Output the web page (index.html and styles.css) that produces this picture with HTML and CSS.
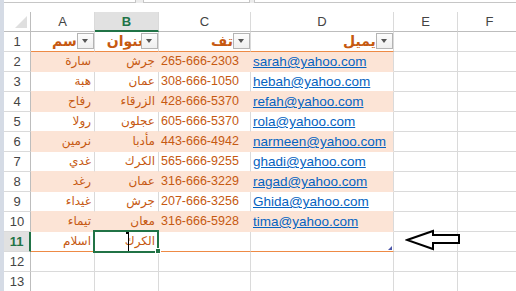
FILE: index.html
```html
<!DOCTYPE html>
<html lang="ar">
<head>
<meta charset="utf-8">
<title>Sheet</title>
<link rel="stylesheet" href="styles.css">
</head>
<body>
<div class="app">
  <div class="frame-left"></div>
  <div class="main">
    <div class="fbar">
      <div class="box name"></div>
      <div class="box mid"></div>
      <div class="box formula"></div>
    </div>
    <div class="gap"></div>
    <div class="sheet">
      <div class="corner"></div>
      <div class="ch">A</div><div class="ch sel">B</div><div class="ch">C</div><div class="ch">D</div><div class="ch">E</div><div class="ch">F</div>

      <div class="rh">1</div>
      <div class="c th"><span class="lbl">الاسم</span><span class="dd"></span></div>
      <div class="c th"><span class="lbl">العنوان</span><span class="dd"></span></div>
      <div class="c th"><span class="lbl">هاتف</span><span class="dd"></span></div>
      <div class="c th d"><span class="lbl">الايميل</span><span class="dd"></span></div>
      <div class="c"></div><div class="c"></div>

      <div class="rh">2</div>
      <div class="c p ar">سارة</div><div class="c p ar">جرش</div><div class="c p ph">265-666-2303</div><div class="c p d em"><u>sarah@yahoo.com</u></div>
      <div class="c"></div><div class="c"></div>

      <div class="rh">3</div>
      <div class="c w ar">هبة</div><div class="c w ar">عمان</div><div class="c w ph">308-666-1050</div><div class="c w d em"><u>hebah@yahoo.com</u></div>
      <div class="c"></div><div class="c"></div>

      <div class="rh">4</div>
      <div class="c p ar">رفاح</div><div class="c p ar">الزرقاء</div><div class="c p ph">428-666-5370</div><div class="c p d em"><u>refah@yahoo.com</u></div>
      <div class="c"></div><div class="c"></div>

      <div class="rh">5</div>
      <div class="c w ar">رولا</div><div class="c w ar">عجلون</div><div class="c w ph">605-666-5370</div><div class="c w d em"><u>rola@yahoo.com</u></div>
      <div class="c"></div><div class="c"></div>

      <div class="rh">6</div>
      <div class="c p ar">نرمين</div><div class="c p ar">مأدبا</div><div class="c p ph">443-666-4942</div><div class="c p d em"><u>narmeen@yahoo.com</u></div>
      <div class="c"></div><div class="c"></div>

      <div class="rh">7</div>
      <div class="c w ar">غدي</div><div class="c w ar">الكرك</div><div class="c w ph">565-666-9255</div><div class="c w d em"><u>ghadi@yahoo.com</u></div>
      <div class="c"></div><div class="c"></div>

      <div class="rh">8</div>
      <div class="c p ar">رغد</div><div class="c p ar">عمان</div><div class="c p ph">316-666-3229</div><div class="c p d em"><u>ragad@yahoo.com</u></div>
      <div class="c"></div><div class="c"></div>

      <div class="rh">9</div>
      <div class="c w ar">غيداء</div><div class="c w ar">جرش</div><div class="c w ph">207-666-3256</div><div class="c w d em"><u>Ghida@yahoo.com</u></div>
      <div class="c"></div><div class="c"></div>

      <div class="rh">10</div>
      <div class="c p ar">تيماء</div><div class="c p ar">معان</div><div class="c p ph">316-666-5928</div><div class="c p d em"><u>tima@yahoo.com</u></div>
      <div class="c"></div><div class="c"></div>

      <div class="rh sel">11</div>
      <div class="c last ar">اسلام</div><div class="c last ar">الكرك</div><div class="c last"></div><div class="c last d"></div>
      <div class="c"></div><div class="c"></div>

      <div class="rh">12</div>
      <div class="c"></div><div class="c"></div><div class="c"></div><div class="c"></div><div class="c"></div><div class="c"></div>

      <div class="rh">13</div>
      <div class="c"></div><div class="c"></div><div class="c"></div><div class="c"></div><div class="c"></div><div class="c"></div>
    </div>
  </div>

  <div class="selection"></div>
  <div class="fill-handle"></div>
  <div class="ibeam"></div>
  <div class="resize"></div>
  <svg class="arrow" width="58" height="24" viewBox="0 0 58 24">
    <polygon points="2,11 28,2 28,6 54,6 54,14 28,14 28,20" fill="#fff" stroke="#000" stroke-width="2" stroke-linejoin="miter"/>
  </svg>
</div>
</body>
</html>
```

FILE: styles.css
```css
* { box-sizing: border-box; }
html, body { margin: 0; padding: 0; background: #fff; }

.app {
  position: relative;
  width: 516px;
  height: 291px;
  overflow: hidden;
  display: flex;
  background: #fff;
  font-family: "Liberation Sans", "DejaVu Sans", sans-serif;
}

.frame-left { width: 4px; flex: none; background: #d5dbe5; }

.main { flex: 1; min-width: 0; display: flex; flex-direction: column; }

.fbar { height: 3px; flex: none; display: flex; background: #ececec; }
.box { background: #fff; border-bottom: 1px solid #c6c6c6; }
.box.name { width: 132px; border-right: 1px solid #c6c6c6; }
.box.mid { width: 107px; margin-left: 7px; border-left: 1px solid #c6c6c6; border-right: 1px solid #c6c6c6; }
.box.formula { flex: 1; margin-left: 4px; border-left: 1px solid #c6c6c6; }

.gap { height: 9px; flex: none; }

.sheet {
  display: grid;
  grid-template-columns: 27px 64px 64px 92px 143px 64px 64px;
  grid-auto-rows: 20px;
  width: 518px;
}

.corner {
  border-right: 1px solid #bdbdbd;
  border-bottom: 1px solid #bdbdbd;
  position: relative;
  background: #fff;
}
.corner::after {
  content: "";
  position: absolute;
  right: 3px;
  bottom: 3px;
  width: 0;
  height: 0;
  border-left: 12px solid transparent;
  border-bottom: 12px solid #dfdfdf;
}

.ch {
  border-right: 1px solid #dadada;
  border-bottom: 1px solid #bdbdbd;
  text-align: center;
  color: #444;
  font-size: 13px;
  line-height: 20px;
  background: #fff;
}
.ch.sel {
  background: #e1e1e1;
  color: #217346;
  font-weight: bold;
  border-bottom: 2px solid #217346;
}

.rh {
  border-right: 1px solid #bdbdbd;
  border-bottom: 1px solid #dadada;
  text-align: center;
  color: #444;
  font-size: 13px;
  line-height: 19px;
  background: #fff;
}
.rh.sel {
  background: #e1e1e1;
  color: #217346;
  font-weight: bold;
  border-right: 2px solid #217346;
}

.c {
  border-right: 1px solid #dadada;
  border-bottom: 1px solid #dadada;
  padding: 0 2px;
  font-size: 13px;
  line-height: 19px;
  white-space: nowrap;
  overflow: hidden;
  color: #c65911;
}

.th {
  position: relative;
  border-bottom-color: #ee8a45;
  text-align: right;
  padding-right: 2px;
  font-weight: bold;
  font-size: 14px;
}
.lbl { direction: rtl; unicode-bidi: isolate; }
.dd {
  position: absolute;
  right: 0;
  top: 1px;
  width: 17px;
  height: 16px;
  border: 1px solid #b4b4b4;
  background: linear-gradient(#fdfdfd, #efefef);
}
.dd::after {
  content: "";
  position: absolute;
  left: 4px;
  top: 5px;
  border-left: 3.5px solid transparent;
  border-right: 3.5px solid transparent;
  border-top: 4px solid #555;
}

.p { background: #fce4d6; border-right-color: #fce4d6; border-bottom-color: #fce4d6; }
.w { border-bottom-color: #fce4d6; }
.d { border-right-color: #dadada; }
.last { border-bottom-color: #ee8a45; }

.ar { text-align: right; padding-right: 3px; direction: rtl; font-size: 12px; }
.ph { padding-left: 2px; font-size: 12.5px; }
.em { color: #0563c1; font-size: 13.5px; padding-left: 2px; }
.em u { text-decoration-color: #0563c1; }

.selection {
  position: absolute;
  left: 93px;
  top: 230px;
  width: 66px;
  height: 23px;
  border: 2px solid #217346;
}
.fill-handle {
  position: absolute;
  left: 155px;
  top: 248px;
  width: 6px;
  height: 6px;
  background: #217346;
  border: 1px solid #fff;
}
.ibeam {
  position: absolute;
  left: 128px;
  top: 232px;
  width: 1px;
  height: 19px;
  background: #000;
}
.ibeam::before {
  content: "";
  position: absolute;
  left: -2px;
  top: 0;
  width: 3px;
  height: 2px;
  background: #000;
}
.resize {
  position: absolute;
  left: 388px;
  top: 246px;
  width: 0;
  height: 0;
  border-left: 4px solid transparent;
  border-bottom: 4px solid #4a55a8;
}
.arrow { position: absolute; left: 405px; top: 229px; }
```
